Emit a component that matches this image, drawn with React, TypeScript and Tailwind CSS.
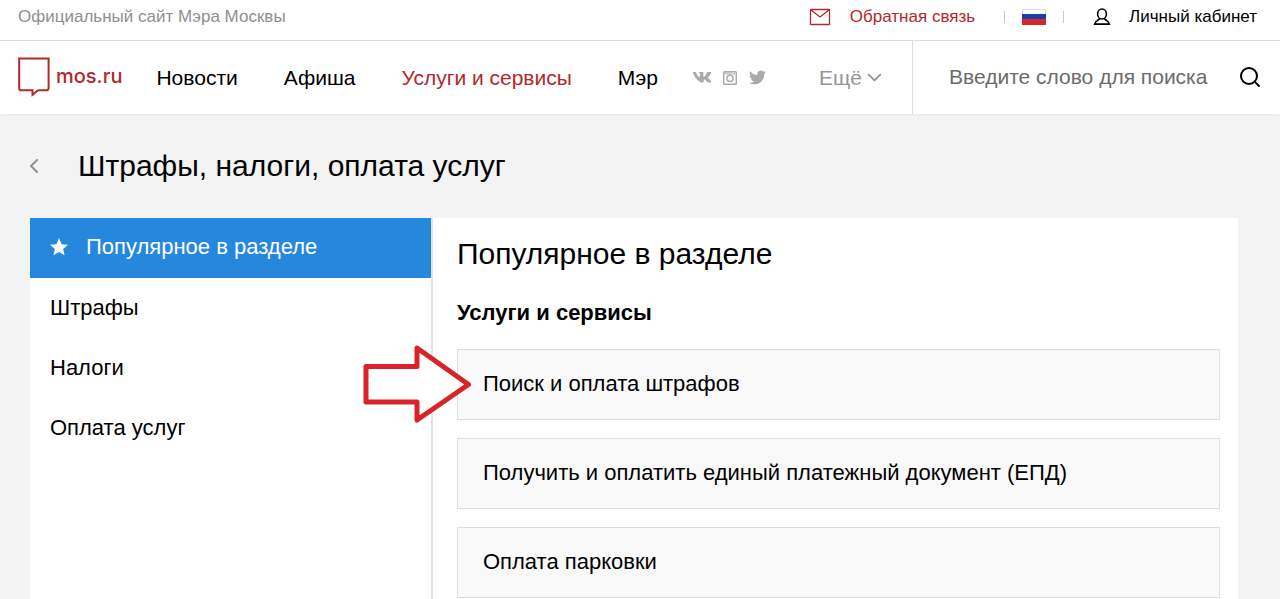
import { ChevronDown, ChevronLeft, Search } from "lucide-react";

const navItems = [
  { label: "Новости", active: false },
  { label: "Афиша", active: false },
  { label: "Услуги и сервисы", active: true },
  { label: "Мэр", active: false },
];

const sections = ["Штрафы", "Налоги", "Оплата услуг"];

const services = [
  "Поиск и оплата штрафов",
  "Получить и оплатить единый платежный документ (ЕПД)",
  "Оплата парковки",
];

function MailIcon() {
  return (
    <svg width="22" height="18" viewBox="0 0 22 18" fill="none" stroke="currentColor" strokeWidth="1.3" aria-hidden="true">
      <rect x="1.5" y="1.5" width="19" height="15" rx="0.6" />
      <path d="M2 2l9 7L20 2" />
    </svg>
  );
}

function UserIcon() {
  return (
    <svg width="18" height="18" viewBox="0 0 18 18" fill="none" stroke="currentColor" strokeWidth="1.6" aria-hidden="true">
      <ellipse cx="9" cy="6" rx="4.4" ry="5" />
      <path d="M6.8 10.4C6.6 12 2.2 12.2 1.6 16.1H16.4C15.8 12.2 11.4 12 11.2 10.4" />
    </svg>
  );
}

function FlagIcon() {
  return (
    <svg width="24" height="16" viewBox="0 0 24 16" aria-hidden="true">
      <rect x="0.5" y="0.5" width="23" height="15" fill="#fff" stroke="#dedede" />
      <rect y="5" width="24" height="6" fill="#1641a5" />
      <rect y="10" width="24" height="6" fill="#d8262c" />
    </svg>
  );
}

function LogoMark() {
  return (
    <svg width="32" height="41" viewBox="0 0 32 41" fill="none" stroke="#b3282b" strokeWidth="2" aria-hidden="true">
      <path d="M1.2 1.5H30.6V31.5L29.6 33.2H21C18 33.2 16.5 36.8 14.5 38V33.2H2.2L1.2 32.2Z" />
    </svg>
  );
}

function VkIcon() {
  return (
    <svg width="18" height="11" viewBox="0 0 18 11" fill="currentColor" aria-hidden="true">
      <path d="M8.8 10.5h1.1s.4 0 .5-.3c.2-.2.2-.6.2-.6s0-1.8.8-2c.8-.3 1.8 1.7 2.9 2.5.8.6 1.5.4 1.5.4l1.6-.1s1.3-.1.7-1.1c-.1-.1-.4-.8-2-2.2-1.6-1.5-1.4-1.2.6-3.8 1.2-1.6 1.6-2.5 1.5-2.9-.2-.4-1-.3-1-.3h-2.5s-.3 0-.5.2c-.2.1-.3.4-.3.4s-.5 1.2-1.1 2.1c-1.3 2-1.8 2.1-2 2-.5-.3-.4-1.2-.4-1.9 0-2 .3-2.8-.6-3C9.5-.2 9.3-.2 8.5-.2c-1 0-1.9 0-2.4.3-.3.1-.6.5-.4.5.2 0 .6.1.9.5.3.4.3 1.3.3 1.3s.2 2.4-.4 2.7c-.4.2-1-.2-2.2-2.2C3.7 2 3.2.7 3.2.7s-.1-.3-.3-.4C2.7.1 2.4.1 2.4.1H.6S0 .1 0 .3c-.1.3 0 .6 0 .6s1.9 4.2 4 6.5c2 2.1 4.8 3.1 4.8 3.1Z" />
    </svg>
  );
}

function InstagramIcon() {
  return (
    <svg width="14" height="14" viewBox="0 0 14 14" fill="none" stroke="currentColor" strokeWidth="1.4" aria-hidden="true">
      <rect x="0.7" y="0.7" width="12.6" height="12.6" rx="0.8" />
      <circle cx="7" cy="7.4" r="3.1" />
      <path d="M1 1.5H9.6V3.6H1Z" fill="currentColor" stroke="none" opacity="0.6" />
      <path d="M10.4 2.2h1.6v1.6h-1.6Z" fill="currentColor" stroke="none" />
    </svg>
  );
}

function TwitterIcon() {
  return (
    <svg width="17" height="15" viewBox="0 2 24 20" fill="currentColor" aria-hidden="true">
      <path d="M24 4.6a10 10 0 0 1-2.8.8 5 5 0 0 0 2.1-2.7 10 10 0 0 1-3.1 1.2 4.9 4.9 0 0 0-8.4 4.5A14 14 0 0 1 1.7 3.1a4.9 4.9 0 0 0 1.5 6.6 4.9 4.9 0 0 1-2.2-.6v.1a4.9 4.9 0 0 0 3.9 4.8 5 5 0 0 1-2.2.1 4.9 4.9 0 0 0 4.6 3.4A9.9 9.9 0 0 1 0 19.5a14 14 0 0 0 7.5 2.2c9.1 0 14-7.5 14-14v-.6A10 10 0 0 0 24 4.6Z" />
    </svg>
  );
}

function StarIcon() {
  return (
    <svg width="18" height="18" viewBox="0 0 18 18" fill="currentColor" aria-hidden="true">
      <path d="M9 0l2.6 6.2 6.4.5-4.9 4.2 1.5 6.4L9 13.9l-5.6 3.4 1.5-6.4L0 6.7l6.4-.5Z" />
    </svg>
  );
}

function PointerArrow() {
  return (
    <svg
      className="pointer-events-none absolute -top-[6px] -left-[96px]"
      width="112"
      height="82"
      viewBox="0 0 112 82"
      fill="#fff"
      stroke="#d9232b"
      strokeWidth="5"
      strokeLinejoin="round"
      aria-hidden="true"
    >
      <path d="M5 23.5H56V5L107.5 41.5L56 77V59H5Z" />
    </svg>
  );
}

function TopBar() {
  return (
    <div className="flex h-[41px] items-center border-b border-[#dedede] pr-[23px] pb-[7px] pl-[18px] text-[17px]">
      <span className="text-[#8f8f8f]">Официальный сайт Мэра Москвы</span>
      <a href="#feedback" className="ml-auto flex items-center gap-[19px] text-[#b3282b]">
        <MailIcon />
        Обратная связь
      </a>
      <button
        type="button"
        aria-label="Язык"
        className="mx-[29px] flex h-3 items-center border-x border-[#c8c8c8] px-[17px]"
      >
        <FlagIcon />
      </button>
      <a href="#account" className="flex items-center gap-[18px] text-black">
        <UserIcon />
        Личный кабинет
      </a>
    </div>
  );
}

function Header() {
  return (
    <header className="bg-white shadow-xs">
      <TopBar />
      <div className="flex h-[73px] items-center pl-[18px] text-[21px]">
        <a href="#home" className="flex items-center gap-[6px] font-[Inter,sans-serif] text-xl font-medium text-[#b3282b]">
          <LogoMark />
          <span className="pb-1">mos.ru</span>
        </a>
        <nav className="ml-[34px] flex items-center gap-[46px]">
          {navItems.map((item) => (
            <a
              key={item.label}
              href="#nav"
              className={item.active ? "text-[#b3282b]" : "text-black"}
            >
              {item.label}
            </a>
          ))}
        </nav>
        <div className="ml-[35px] flex items-center gap-3 text-[#aaa]">
          <a href="#vk" aria-label="ВКонтакте">
            <VkIcon />
          </a>
          <a href="#instagram" aria-label="Instagram">
            <InstagramIcon />
          </a>
          <a href="#twitter" aria-label="Twitter">
            <TwitterIcon />
          </a>
        </div>
        <button type="button" className="mr-[26px] ml-auto flex items-center gap-px text-[#969696]">
          Ещё
          <ChevronDown size={23} />
        </button>
        <form className="flex w-[368px] items-center self-stretch border-l border-[#dedede] pr-[18px] pb-[2px] pl-9">
          <input
            type="text"
            aria-label="Поиск"
            placeholder="Введите слово для поиска"
            className="min-w-0 flex-1 outline-none placeholder:text-[#6b6b6b]"
          />
          <button type="button" aria-label="Найти">
            <Search size={24} />
          </button>
        </form>
      </div>
    </header>
  );
}

function Sidebar() {
  return (
    <aside className="w-[403px] shrink-0 border-r-2 border-[#e4e4e4] text-[22px]">
      <a href="#popular" className="flex h-[60px] items-center gap-[18px] bg-[#2588dd] pb-[3px] pl-5 text-white">
        <StarIcon />
        Популярное в разделе
      </a>
      {sections.map((section) => (
        <a key={section} href="#section" className="flex h-[60px] items-center pb-[2px] pl-5">
          {section}
        </a>
      ))}
    </aside>
  );
}

export default function App() {
  return (
    <div className="flex min-h-screen flex-col bg-[#f3f3f3] font-['Liberation_Sans',Arial,sans-serif] text-black">
      <Header />
      <main className="flex grow flex-col pr-[42px] pl-[30px]">
        <div className="flex h-[104px] items-center gap-8 pb-px">
          <a href="#back" aria-label="Назад" className="-ml-2 text-[#8f8f8f]">
            <ChevronLeft size={24} />
          </a>
          <h1 className="text-3xl">Штрафы, налоги, оплата услуг</h1>
        </div>
        <div className="flex grow bg-white">
          <Sidebar />
          <section className="min-w-0 flex-1 pt-4 pr-[18px] pb-px pl-6">
            <h2 className="text-3xl leading-10">Популярное в разделе</h2>
            <h3 className="mt-[21px] mb-[18px] text-[22px] leading-9 font-bold">Услуги и сервисы</h3>
            <ul className="flex flex-col gap-[18px]">
              {services.map((service, index) => (
                <li key={service} className="relative">
                  <a
                    href="#service"
                    className="flex h-[71px] items-center border border-[#dedede] bg-[#f9f9f9] px-[25px] pb-[3px] text-[22px]"
                  >
                    {service}
                  </a>
                  {index === 0 && <PointerArrow />}
                </li>
              ))}
            </ul>
          </section>
        </div>
      </main>
    </div>
  );
}
